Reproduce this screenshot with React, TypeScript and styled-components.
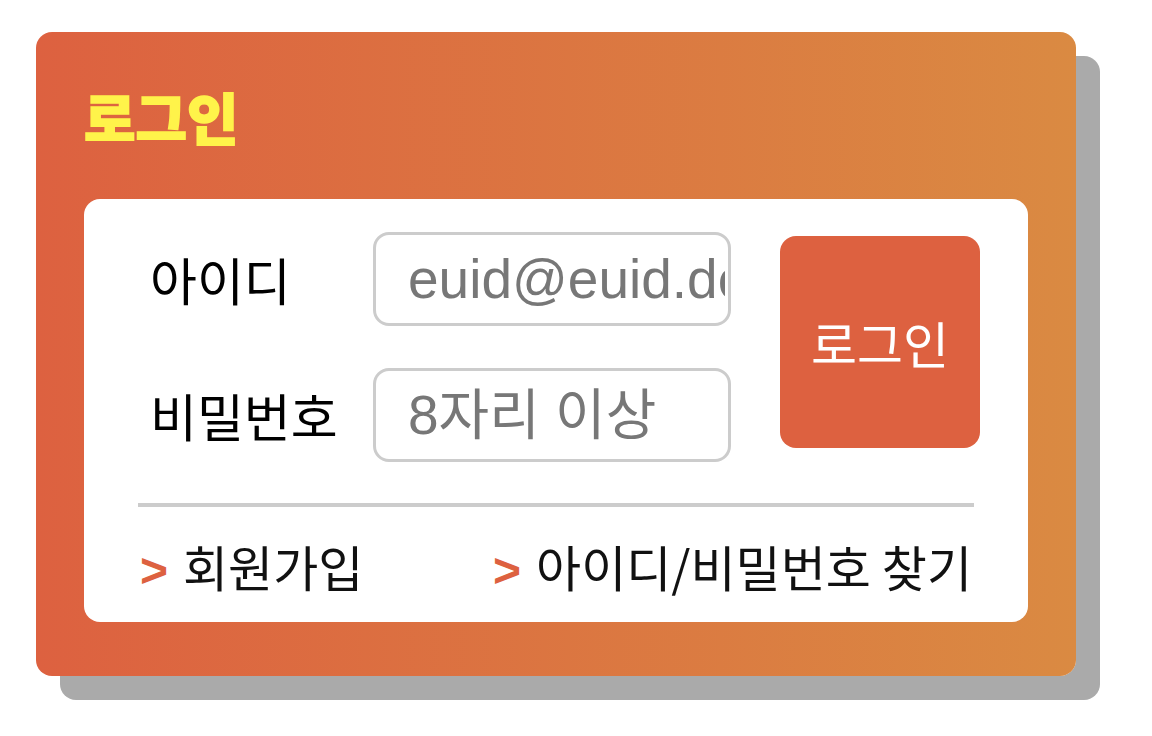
import styled, { createGlobalStyle } from 'styled-components';
import React from 'react';

const GlobalStyle = createGlobalStyle`
  body {
    margin: 0;
    background: #fff;
    font-family: 'Noto Sans CJK KR', 'Noto Sans', sans-serif;
  }
  * {
    box-sizing: border-box;
  }
`;

const Page = styled.div`
  min-height: 736px;
  padding: 32px 0 0 36px;
`;
const Card = styled.div`
  width: 1040px;
  height: 644px;
  padding: 48px;
  border-radius: 16px;
  background: linear-gradient(to right, #dd6140, #da8a42);
  box-shadow: 24px 24px 0 #aaa;
`;
const Title = styled.h1`
  margin: 0 0 47px;
  font-size: 56px;
  line-height: 72px;
  font-weight: 900;
  color: #fff34a;
  -webkit-text-stroke: 1.5px #fff34a;
`;
const Panel = styled.div`
  height: 423px;
  padding: 33px 54px 0;
  border-radius: 16px;
  background: #fff;
`;
const Form = styled.form`
  display: flex;
  align-items: flex-start;
  gap: 49px;
  padding-left: 12px;
  margin-right: -6px;
`;
const Fields = styled.div`
  display: grid;
  grid-template-columns: 223px 358px;
  row-gap: 42px;
`;
const Label = styled.label`
  font-size: 51px;
  line-height: 94px;
  color: #000;
`;
const Input = styled.input`
  width: 358px;
  height: 94px;
  padding: 0 3px 0 32px;
  border: 3px solid #ccc;
  border-radius: 16px;
  outline: none;
  font-family: 'Liberation Sans', 'Noto Sans CJK KR', sans-serif;
  font-size: 55px;
  color: #333;
  &::placeholder {
    color: #777;
  }
`;
const Button = styled.button`
  width: 200px;
  height: 212px;
  margin-top: 4px;
  border: 0;
  border-radius: 16px;
  background-color: #dd6140;
  color: #fff;
  font-family: 'Noto Sans CJK KR', sans-serif;
  font-size: 50px;
  cursor: pointer;
`;
const Divider = styled.hr`
  margin: 41px 0 0;
  height: 4px;
  border: 0;
  background: #ccc;
`;
const Links = styled.div`
  display: flex;
  justify-content: space-between;
  margin-top: 26px;
  padding: 0 2px;
`;
const LinkItem = styled.a`
  font-size: 49px;
  line-height: 66px;
  color: #111;
  text-decoration: none;
  cursor: pointer;
`;
const Arrow = styled.span`
  font-family: 'Liberation Sans', sans-serif;
  font-size: 48px;
  font-weight: 700;
  color: #dd6140;
  margin-right: 15px;
`;

export default function App() {
  return (
    <Page>
      <GlobalStyle />
      <Card>
        <Title>로그인</Title>
        <Panel>
          <Form onSubmit={(e) => e.preventDefault()}>
            <Fields>
              <Label htmlFor="id">아이디</Label>
              <Input id="id" type="text" placeholder="euid@euid.design" />
              <Label htmlFor="pw">비밀번호</Label>
              <Input id="pw" type="password" placeholder="8자리 이상" />
            </Fields>
            <Button type="submit">로그인</Button>
          </Form>
          <Divider />
          <Links>
            <LinkItem>
              <Arrow>&gt;</Arrow>회원가입
            </LinkItem>
            <LinkItem>
              <Arrow>&gt;</Arrow>아이디/비밀번호 찾기
            </LinkItem>
          </Links>
        </Panel>
      </Card>
    </Page>
  );
}
